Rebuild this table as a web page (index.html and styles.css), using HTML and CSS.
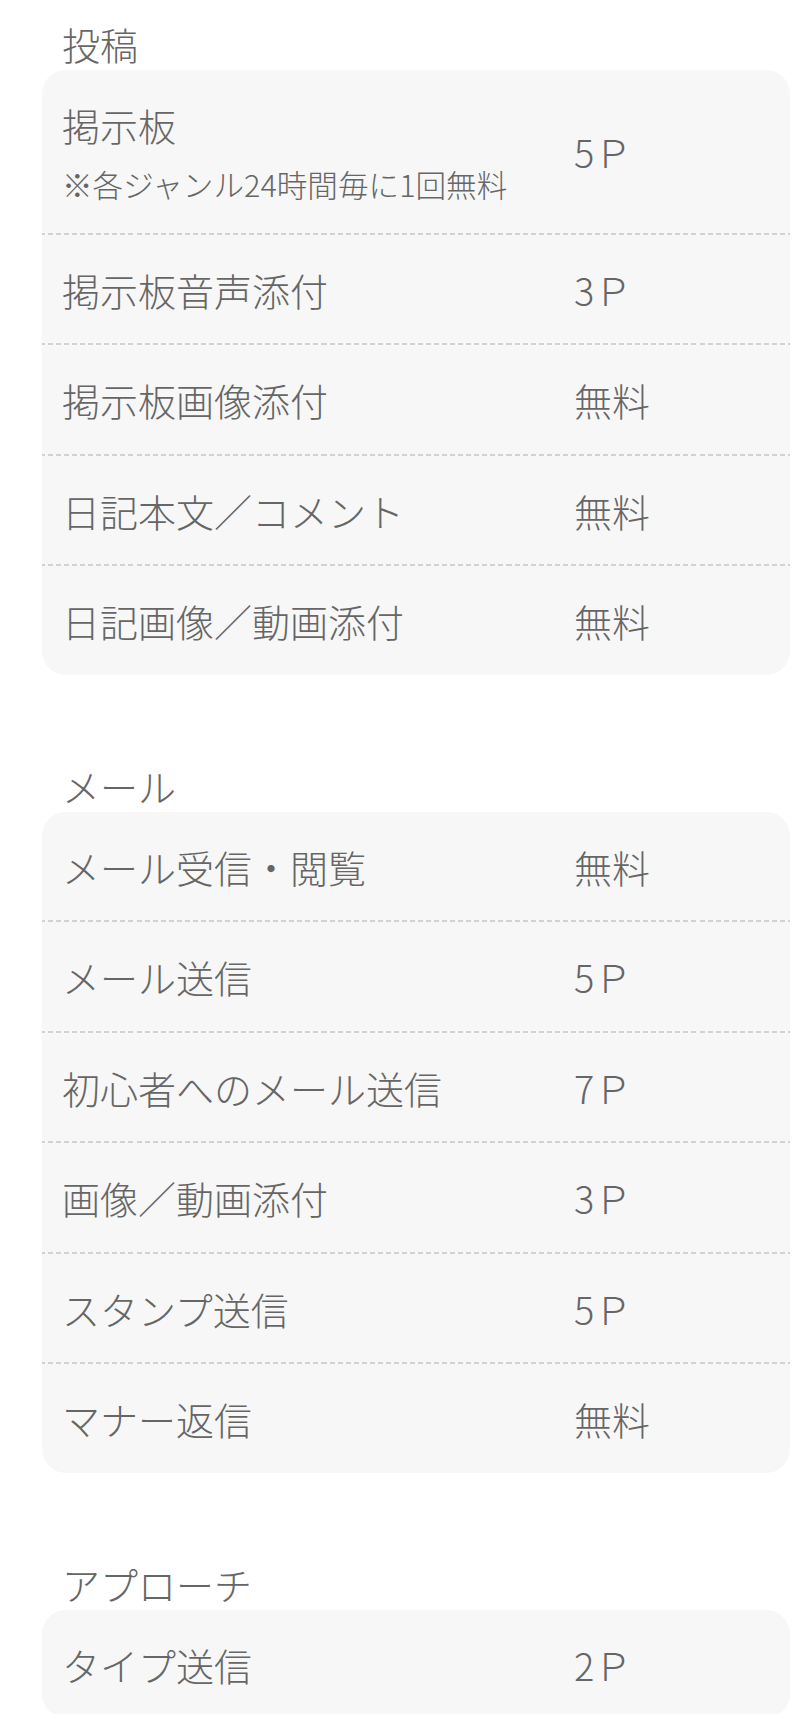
FILE: index.html
```html
<!DOCTYPE html>
<html lang="ja">
<head>
    <meta charset="UTF-8">
    <meta name="viewport" content="width=device-width, initial-scale=1.0">
    <title>ポイント一覧</title>
    <link rel="stylesheet" href="styles.css">
</head>
<body>
    <div class="price-list">
        <section class="section">
            <h2 class="section-title">投稿</h2>
            <div class="card">
                <div class="row">
                    <div class="label">
                        掲示板
                        <div class="note">※各ジャンル24時間毎に1回無料</div>
                    </div>
                    <div class="value">5Ｐ</div>
                </div>
                <div class="row">
                    <div class="label">掲示板音声添付</div>
                    <div class="value">3Ｐ</div>
                </div>
                <div class="row">
                    <div class="label">掲示板画像添付</div>
                    <div class="value">無料</div>
                </div>
                <div class="row">
                    <div class="label">日記本文／コメント</div>
                    <div class="value">無料</div>
                </div>
                <div class="row">
                    <div class="label">日記画像／動画添付</div>
                    <div class="value">無料</div>
                </div>
            </div>
        </section>

        <section class="section">
            <h2 class="section-title">メール</h2>
            <div class="card">
                <div class="row">
                    <div class="label">メール受信・閲覧</div>
                    <div class="value">無料</div>
                </div>
                <div class="row">
                    <div class="label">メール送信</div>
                    <div class="value">5Ｐ</div>
                </div>
                <div class="row">
                    <div class="label">初心者へのメール送信</div>
                    <div class="value">7Ｐ</div>
                </div>
                <div class="row">
                    <div class="label">画像／動画添付</div>
                    <div class="value">3Ｐ</div>
                </div>
                <div class="row">
                    <div class="label">スタンプ送信</div>
                    <div class="value">5Ｐ</div>
                </div>
                <div class="row">
                    <div class="label">マナー返信</div>
                    <div class="value">無料</div>
                </div>
            </div>
        </section>

        <section class="section">
            <h2 class="section-title">アプローチ</h2>
            <div class="card">
                <div class="row">
                    <div class="label">タイプ送信</div>
                    <div class="value">2Ｐ</div>
                </div>
            </div>
        </section>
    </div>
</body>
</html>
```

FILE: styles.css
```css
body {
    margin: 0;
    background-color: #fff;
    font-family: "Noto Sans CJK JP", "Noto Sans", sans-serif;
    font-weight: 300;
    color: #666;
}
.price-list {
    padding: 17px 10px 40px 42px;
}
.section + .section {
    margin-top: 84px;
}
.section-title {
    margin: 0;
    padding: 0 20px;
    font-size: 38px;
    font-weight: 300;
    line-height: 53px;
}
.card {
    background-color: #f7f7f7;
    border-radius: 24px;
    overflow: hidden;
}
.row {
    display: grid;
    grid-template-columns: 512px 1fr;
    align-items: center;
    padding: 26px 20px 25.5px;
    font-size: 38px;
    line-height: 57px;
    border-bottom: 2px solid transparent;
    border-image: repeating-linear-gradient(90deg, #d2d2d2 0 5px, transparent 5px 8px) 2;
}
.row:last-child {
    border-bottom: none;
}
.note {
    margin-top: 8px;
    font-size: 30.6px;
    line-height: 46px;
}
.value {
    white-space: nowrap;
}
```
